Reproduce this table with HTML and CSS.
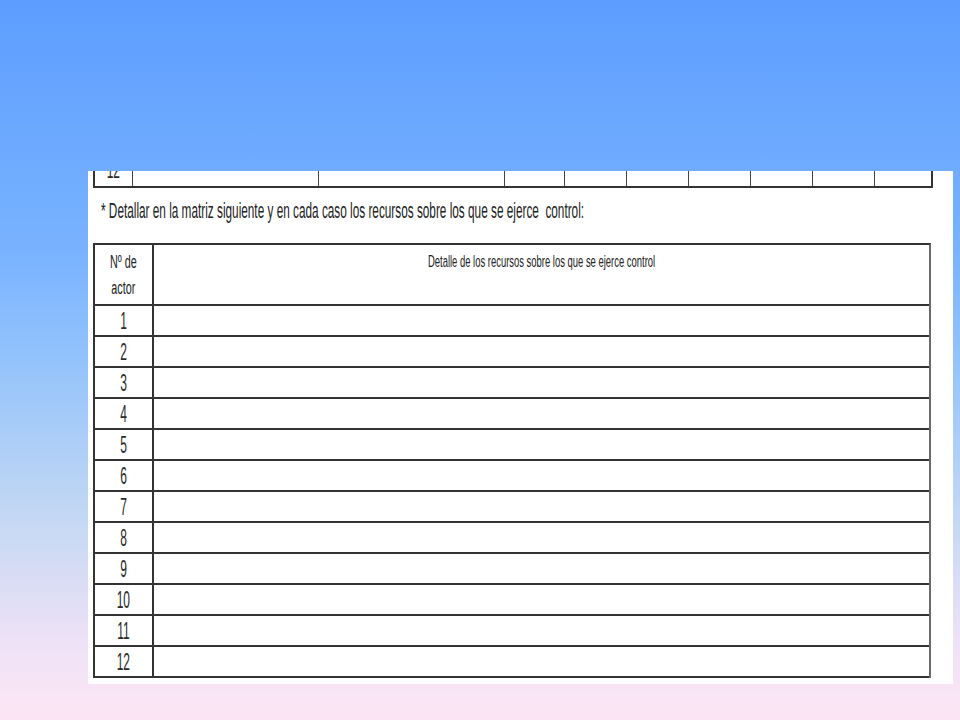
FILE: index.html
```html
<!DOCTYPE html>
<html lang="es">
<head>
    <meta charset="UTF-8">
    <meta name="viewport" content="width=device-width, initial-scale=1.0">
    <title>Matriz de recursos</title>
    <link rel="stylesheet" href="styles.css">
</head>
<body>
    <div class="slide">
        <div class="panel">
            <!-- final de la tabla anterior -->
            <div class="prev-table">
                <div class="prev-cell first"><span class="num">12</span></div>
                <div class="prev-cell"></div>
                <div class="prev-cell"></div>
                <div class="prev-cell"></div>
                <div class="prev-cell"></div>
                <div class="prev-cell"></div>
                <div class="prev-cell"></div>
                <div class="prev-cell"></div>
                <div class="prev-cell"></div>
                <div class="prev-cell last"></div>
            </div>

            <p class="note"><span class="narrow">* Detallar en la matriz siguiente y en cada caso los recursos sobre los que se ejerce&nbsp; control:</span></p>

            <div class="matrix">
                <div class="row head">
                    <div class="col-num"><span class="narrow head-num">Nº de<br>actor</span></div>
                    <div class="col-detail"><span class="narrow head-detail">Detalle de los recursos sobre los que se ejerce control</span></div>
                </div>
                <div class="row"><div class="col-num"><span class="num">1</span></div><div class="col-detail"></div></div>
                <div class="row"><div class="col-num"><span class="num">2</span></div><div class="col-detail"></div></div>
                <div class="row"><div class="col-num"><span class="num">3</span></div><div class="col-detail"></div></div>
                <div class="row"><div class="col-num"><span class="num">4</span></div><div class="col-detail"></div></div>
                <div class="row"><div class="col-num"><span class="num">5</span></div><div class="col-detail"></div></div>
                <div class="row"><div class="col-num"><span class="num">6</span></div><div class="col-detail"></div></div>
                <div class="row"><div class="col-num"><span class="num">7</span></div><div class="col-detail"></div></div>
                <div class="row"><div class="col-num"><span class="num">8</span></div><div class="col-detail"></div></div>
                <div class="row"><div class="col-num"><span class="num">9</span></div><div class="col-detail"></div></div>
                <div class="row"><div class="col-num"><span class="num">10</span></div><div class="col-detail"></div></div>
                <div class="row"><div class="col-num"><span class="num">11</span></div><div class="col-detail"></div></div>
                <div class="row last"><div class="col-num"><span class="num">12</span></div><div class="col-detail"></div></div>
            </div>
        </div>
    </div>
</body>
</html>
```

FILE: styles.css
```css
body {
    margin: 0;
    font-family: "Liberation Sans", Arial, sans-serif;
    color: #222;
}

.slide {
    width: 960px;
    height: 720px;
    padding-top: 171px;
    box-sizing: border-box;
    background: linear-gradient(to bottom, #5c9dff 0%, #79b3ff 35%, #93c3fb 50%, #c4d8f3 72%, #f0e2f6 90%, #fce6f5 100%);
    overflow: hidden;
}

.panel {
    margin-left: 88px;
    width: 865px;
    height: 513px;
    padding-left: 5px;
    background-color: white;
    box-sizing: border-box;
}

.narrow {
    display: inline-block;
    white-space: nowrap;
    transform: scaleX(0.536);
    transform-origin: left center;
}

.num {
    display: inline-block;
    font-size: 24px;
    line-height: 24px;
    color: #2a2a2a;
    transform: scaleX(0.5);
}

/* tabla anterior, solo la ultima fila */
.prev-table {
    display: grid;
    grid-template-columns: 38px 186px 186px 60px 62px 62px 62px 62px 62px 60px;
    width: 840px;
    height: 17px;
    box-sizing: border-box;
    border-left: 2px solid #333;
    border-right: 2px solid #333;
    border-bottom: 2px solid #333;
    overflow: hidden;
}

.prev-cell {
    border-right: 1px solid #444;
}

.prev-cell.last {
    border-right: none;
}

.prev-cell.first {
    display: flex;
    justify-content: center;
    align-items: flex-end;
    overflow: hidden;
}

.prev-cell.first .num {
    margin-bottom: 4px;
}

.note {
    margin: 0;
    height: 55px;
    padding: 10px 0 0 8px;
    box-sizing: border-box;
    font-size: 22px;
    line-height: 26px;
}

.matrix {
    width: 838px;
    border: 2px solid #333;
    border-right-color: #6a6a6a;
    border-bottom: none;
    box-sizing: border-box;
}

.row {
    display: flex;
    height: 31px;
    border-bottom: 2px solid #333;
    box-sizing: border-box;
}

.row.head {
    height: 61px;
}

.col-num {
    width: 57px;
    flex-shrink: 0;
    border-right: 2px solid #333;
    display: flex;
    justify-content: center;
    align-items: center;
}

.col-detail {
    flex: 1;
    display: flex;
    justify-content: center;
}

.head .col-num {
    align-items: flex-start;
}

.head-num {
    font-size: 18px;
    line-height: 26px;
    text-align: center;
    transform: scaleX(0.6);
    transform-origin: center top;
    margin-top: 4px;
}

.head-detail {
    font-size: 16px;
    line-height: 18px;
    transform: scaleX(0.59);
    transform-origin: center top;
    margin-top: 8px;
}
```
